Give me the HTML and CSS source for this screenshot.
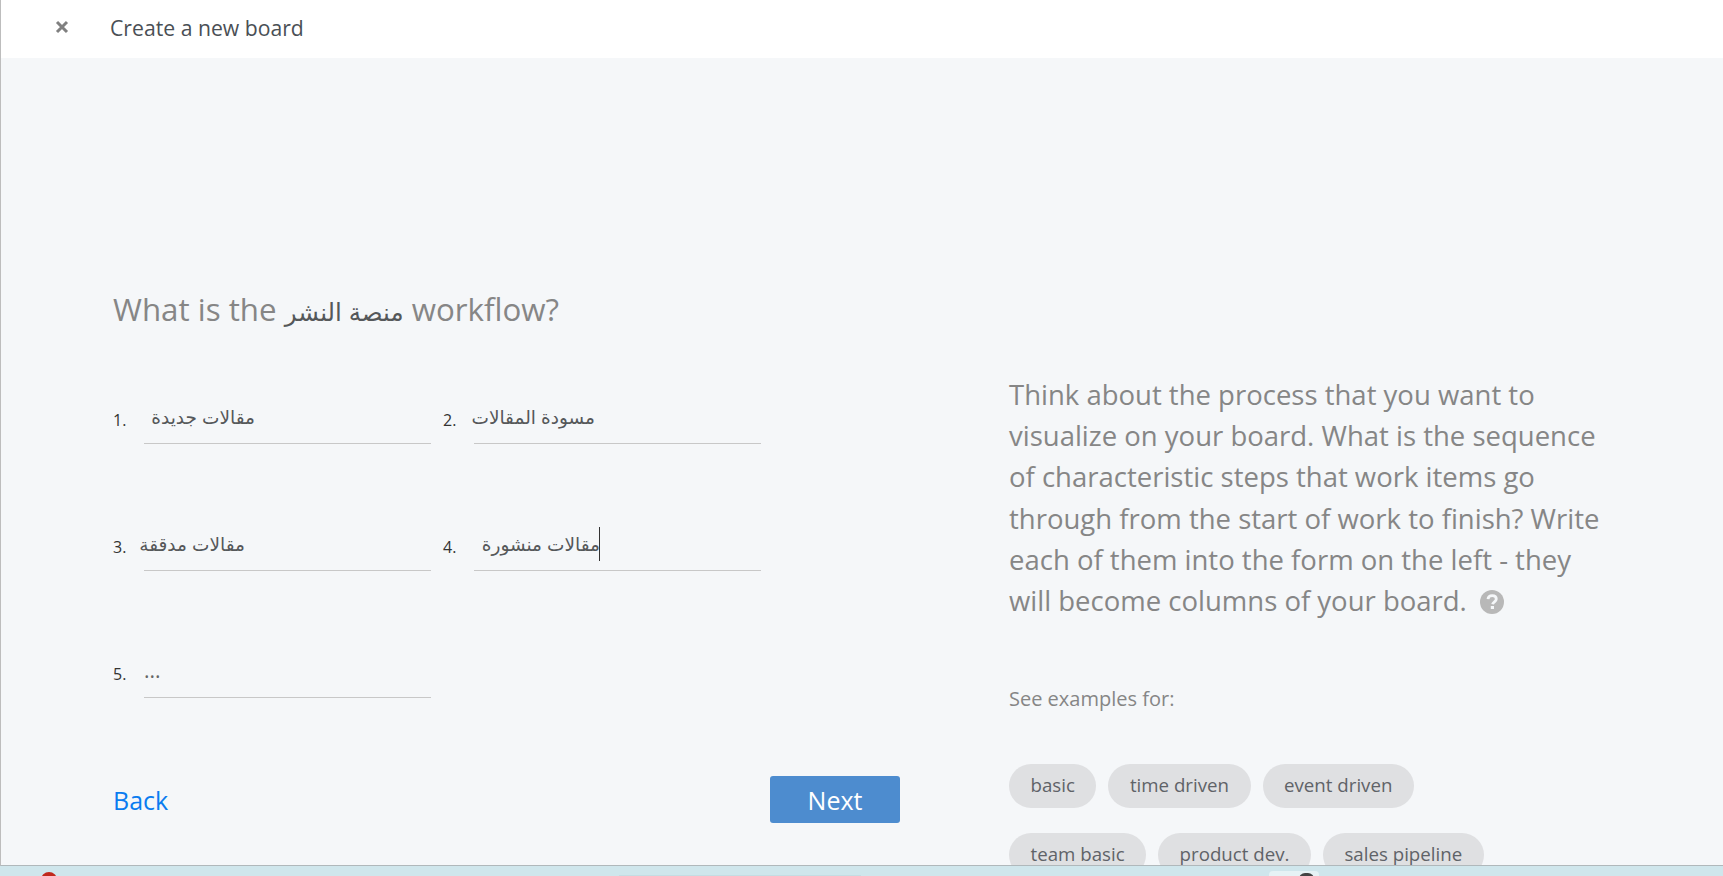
FILE: index.html
```html
<!DOCTYPE html>
<html lang="en">
<head>
    <meta charset="UTF-8">
    <meta name="viewport" content="width=device-width, initial-scale=1.0">
    <title>Create a new board</title>
    <link rel="stylesheet" href="styles.css">
</head>
<body>
    <div class="window">
        <header class="top-bar">
            <svg class="close-icon" viewBox="0 0 14 14" width="14" height="14">
                <path d="M2 2 L12 12 M12 2 L2 12" stroke="#808080" stroke-width="3" fill="none"/>
            </svg>
            <span class="top-title">Create a new board</span>
        </header>

        <main class="content">
            <section class="left-col">
                <h1 class="question">What is the <span class="board-name">منصة النشر</span> workflow?</h1>

                <div class="steps">
                    <div class="step">
                        <span class="step-num">1.</span>
                        <div class="step-field field-a" dir="rtl">مقالات جديدة</div>
                    </div>
                    <div class="step">
                        <span class="step-num">2.</span>
                        <div class="step-field field-b" dir="rtl">مسودة المقالات</div>
                    </div>
                    <div class="step">
                        <span class="step-num">3.</span>
                        <div class="step-field field-c" dir="rtl">مقالات مدققة</div>
                    </div>
                    <div class="step">
                        <span class="step-num">4.</span>
                        <div class="step-field field-d" dir="rtl"><span class="caret"></span>مقالات منشورة</div>
                    </div>
                    <div class="step">
                        <span class="step-num">5.</span>
                        <div class="step-field field-empty">...</div>
                    </div>
                </div>

                <div class="actions">
                    <a class="back-link" href="#">Back</a>
                    <button class="next-btn" type="button">Next</button>
                </div>
            </section>

            <aside class="right-col">
                <p class="help-text">Think about the process that you want to visualize on your board. What is the sequence of characteristic steps that work items go through from the start of work to finish? Write each of them into the form on the left - they will become columns of your board.
                    <svg class="help-icon" viewBox="0 0 24 24" width="24" height="24">
                        <circle cx="12" cy="12" r="12" fill="#b8b8b8"/>
                        <path d="M8 9.2 C8.2 6.8 10 5.6 12.2 5.6 C14.6 5.6 16.3 7 16.3 9 C16.3 11.6 13 11.8 12.6 14.2" stroke="#f5f7f9" stroke-width="2.8" fill="none"/>
                        <rect x="10.8" y="16" width="3.2" height="3" fill="#f5f7f9"/>
                    </svg>
                </p>
                <p class="examples-label">See examples for:</p>
                <div class="tags">
                    <span class="tag">basic</span>
                    <span class="tag">time driven</span>
                    <span class="tag">event driven</span>
                </div>
                <div class="tags">
                    <span class="tag">team basic</span>
                    <span class="tag">product dev.</span>
                    <span class="tag">sales pipeline</span>
                </div>
            </aside>
        </main>
    </div>
    <div class="bottom-strip">
        <span class="strip-dot"></span>
        <span class="strip-bar"></span>
        <span class="strip-tab"><span class="strip-tab-mark"></span></span>
    </div>
</body>
</html>
```

FILE: styles.css
```css
html, body {
    margin: 0;
    padding: 0;
    height: 100%;
    overflow: hidden;
}

body {
    font-family: "Open Sans", "Noto Sans", "DejaVu Sans", sans-serif;
    background-color: #cfe6ec;
    display: flex;
    flex-direction: column;
}

.window {
    height: 866px;
    flex: none;
    overflow: hidden;
    background-color: #f5f7f9;
    border-left: 1px solid #bdbdbd;
    border-bottom: 1px solid #b0b8bb;
    box-sizing: border-box;
}

.top-bar {
    height: 58px;
    box-sizing: border-box;
    padding: 0 0 4px 54px;
    background-color: #fff;
    display: flex;
    align-items: center;
}

.close-icon {
    display: block;
}

.top-title {
    margin-left: 41px;
    font-size: 21.2px;
    color: #4a4f55;
}

.content {
    display: flex;
}

.left-col {
    width: 787px;
    margin-left: 112px;
    padding-top: 231px;
}

.question {
    margin: 0;
    font-size: 31.3px;
    font-weight: 400;
    line-height: 40px;
    color: #868686;
}

.board-name {
    font-family: "Liberation Sans", "DejaVu Sans", sans-serif;
    font-size: 24.5px;
    color: #55585a;
}

.steps {
    display: grid;
    grid-template-columns: 330px 320px;
    row-gap: 76px;
    margin-top: 60px;
}

.step {
    display: flex;
    align-items: flex-end;
}

.step-num {
    width: 31px;
    font-size: 16px;
    color: #333;
    padding-bottom: 13px;
}

.step-field {
    width: 287px;
    height: 51px;
    box-sizing: border-box;
    border-bottom: 1px solid #c8c8c8;
    font-family: "Liberation Sans", "DejaVu Sans", sans-serif;
    font-size: 18.5px;
    line-height: 30px;
    padding-top: 10px;
    color: #55585a;
    white-space: nowrap;
    position: relative;
}

.field-a {
    padding-right: 176px;
}

.field-b {
    padding-right: 166px;
}

.field-c {
    padding-right: 186px;
}

.field-d {
    padding-right: 161px;
}

.field-empty {
    padding-top: 8px;
    font-family: "Open Sans", sans-serif;
    font-size: 21px;
    color: #666;
}

.caret {
    position: absolute;
    right: 161px;
    top: 7px;
    width: 1px;
    height: 34px;
    background-color: #333;
}

.actions {
    display: flex;
    justify-content: space-between;
    align-items: center;
    margin-top: 78px;
}

.back-link {
    font-size: 25px;
    color: #0a7cf0;
    text-decoration: none;
}

.next-btn {
    width: 130px;
    height: 47px;
    border: none;
    border-radius: 3px;
    background-color: #4d8ccf;
    color: #fff;
    font-family: inherit;
    font-size: 25px;
}

.right-col {
    margin-left: 109px;
    padding-top: 316px;
    width: 610px;
}

.help-text {
    margin: 0;
    font-size: 27.5px;
    line-height: 41.2px;
    color: #868686;
}

.help-icon {
    margin-left: 6px;
    vertical-align: -3px;
}

.examples-label {
    margin: 64px 0 0;
    font-size: 20px;
    color: #868686;
}

.tags {
    display: flex;
    gap: 12px;
    margin-top: 25px;
}

.examples-label + .tags {
    margin-top: 52px;
}

.tag {
    height: 44px;
    padding: 0 21.5px;
    border-radius: 22px;
    background-color: #dfe0e2;
    color: #5f6368;
    font-size: 18.7px;
    line-height: 42px;
}

.bottom-strip {
    flex: 1;
    display: flex;
    align-items: flex-start;
    overflow: hidden;
    background-color: #cfe6ec;
}

.strip-dot {
    width: 16px;
    height: 16px;
    margin: 6px 0 0 41px;
    border-radius: 50%;
    background-color: #c0281c;
}

.strip-bar {
    width: 242px;
    height: 4px;
    margin: 9px 0 0 562px;
    background-color: #c4dde3;
}

.strip-tab {
    width: 50px;
    height: 6px;
    margin: 5px 0 0 408px;
    border-radius: 4px 4px 0 0;
    background-color: #e6f2f5;
    display: flex;
    justify-content: flex-end;
}

.strip-tab-mark {
    width: 15px;
    height: 6px;
    margin: 2px 5px 0 0;
    border-radius: 7px 7px 0 0;
    background-color: #444;
}
```
